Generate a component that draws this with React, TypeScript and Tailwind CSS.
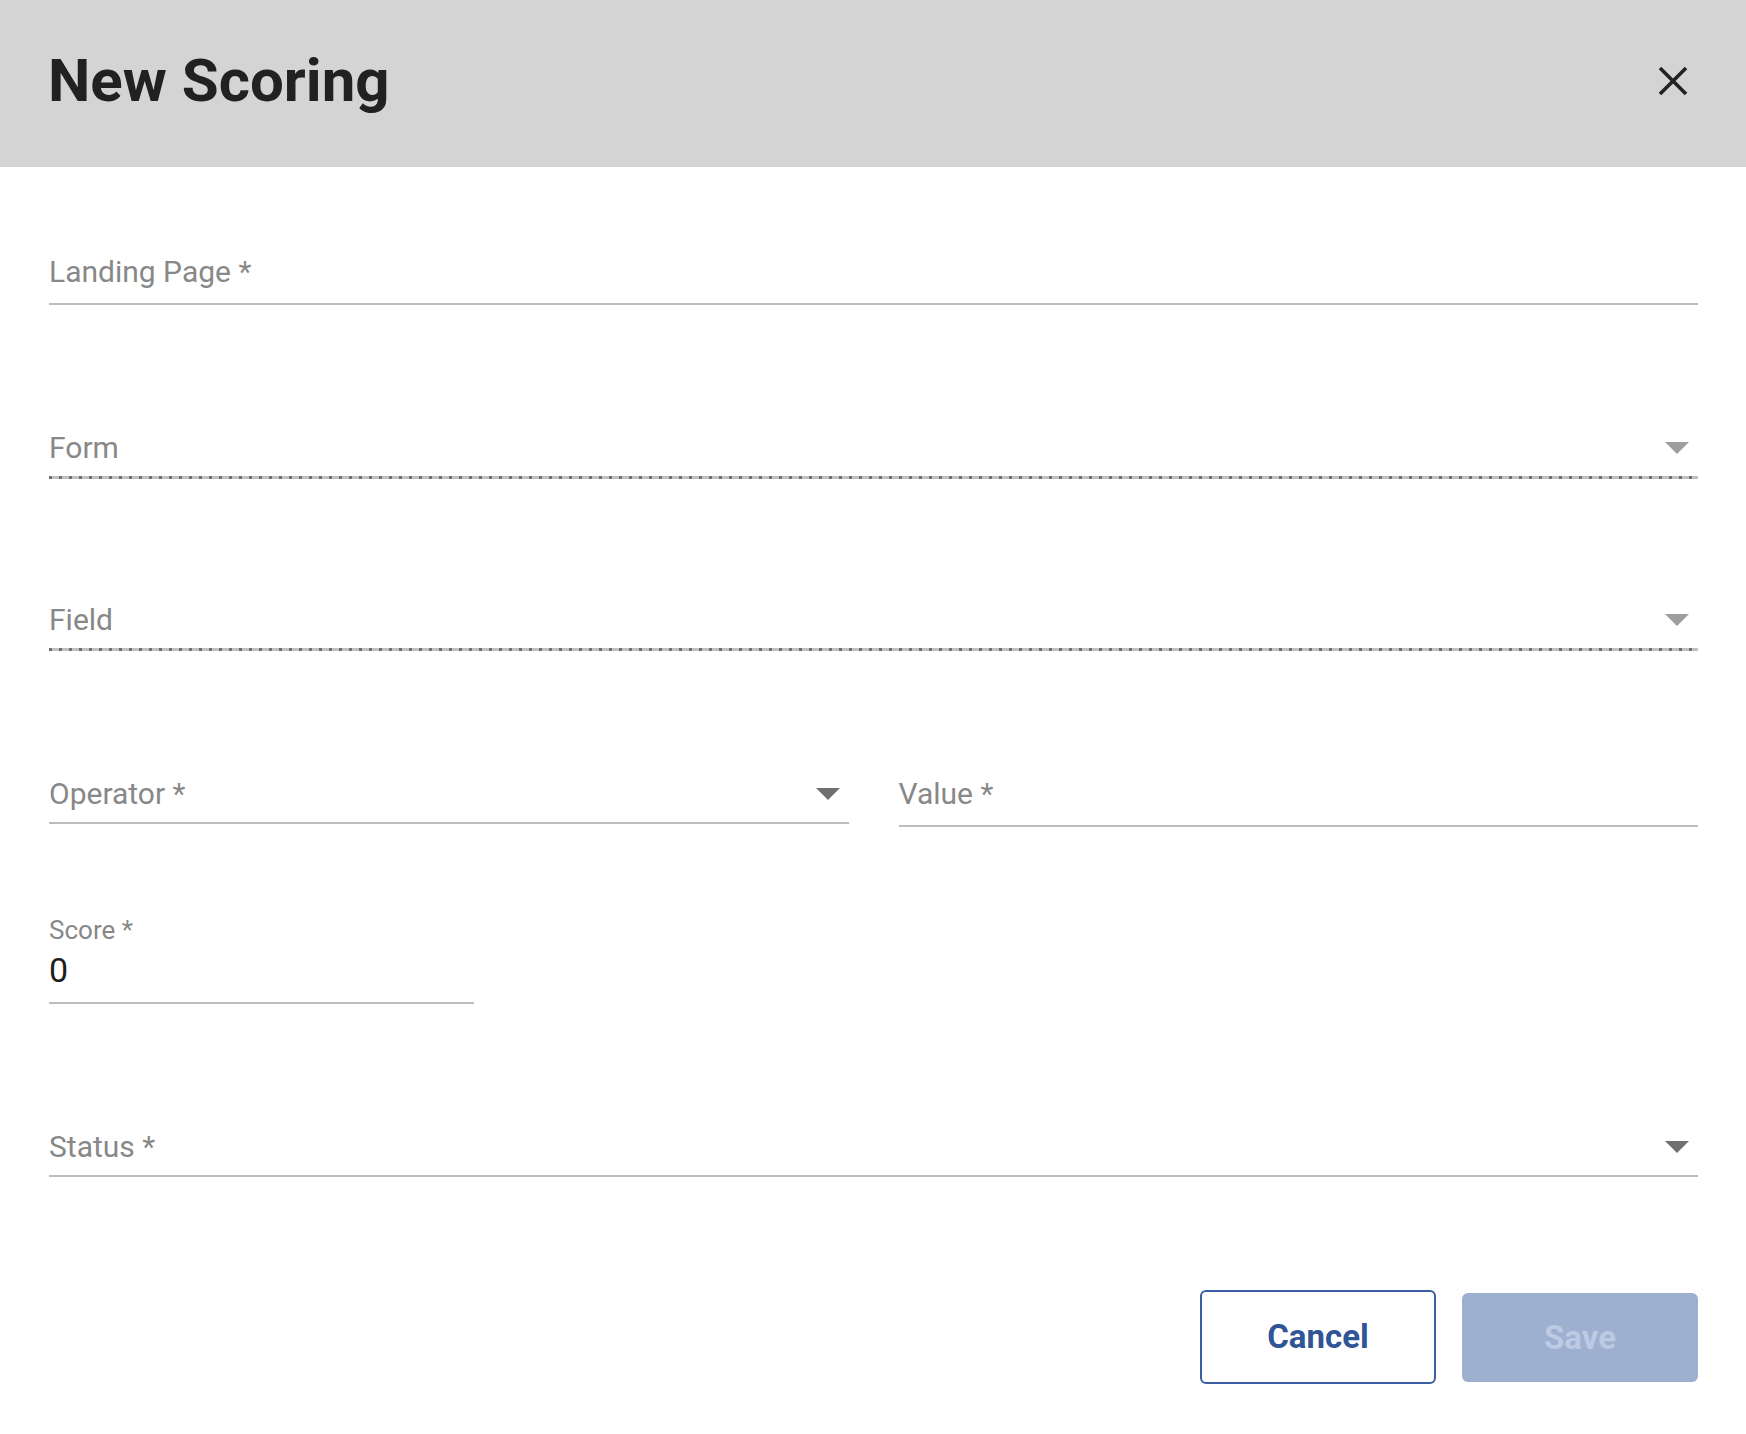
import React from 'react'

type FieldProps = {
  label: string
  arrow?: 'light' | 'dark'
  dotted?: boolean
  lineClass?: string
}

function Field({ label, arrow, dotted, lineClass }: FieldProps) {
  return (
    <div className="flex flex-col">
      <div className={`flex items-end justify-between ${lineClass ?? 'pb-[13px]'}`}>
        <span className="text-[30px] leading-none text-[#888888]">{label}</span>
        {arrow && (
          <span
            className={`mb-[9px] mr-[9px] h-0 w-0 border-x-[12px] border-t-[12px] border-x-transparent ${
              arrow === 'light' ? 'border-t-[#9e9e9e]' : 'border-t-[#707070]'
            }`}
          />
        )}
      </div>
      {dotted ? (
        <div className="-mb-px h-[3px] bg-[repeating-linear-gradient(to_right,#707070_0_3px,#c0c0c0_3px_10px)]" />
      ) : (
        <div className="h-[2px] bg-[#bdbdbd]" />
      )}
    </div>
  )
}

export default function App() {
  return (
    <div className="min-h-[1434px] w-full bg-white font-['Roboto',sans-serif]">
      <header className="flex h-[167px] items-center justify-between bg-[#d4d4d4] pb-[5px] pl-[48px] pr-[58px]">
        <h1 className="text-[60px] font-bold leading-none text-[#212121]">New Scoring</h1>
        <button className="flex h-[30px] w-[30px] items-center justify-center" aria-label="Close">
          <svg width="30" height="30" viewBox="0 0 30 30" fill="none">
            <path d="M2 2 L28 28 M28 2 L2 28" stroke="#222222" strokeWidth="3.6" />
          </svg>
        </button>
      </header>

      <div className="flex flex-col pl-[49px] pr-[48px]">
        <div className="mt-[90px]">
          <Field label="Landing Page *" lineClass="pb-[16px]" />
        </div>
        <div className="mt-[128px]">
          <Field label="Form" arrow="light" dotted />
        </div>
        <div className="mt-[127px]">
          <Field label="Field" arrow="light" dotted />
        </div>
        <div className="mt-[129px] grid grid-cols-2 gap-[50px]">
          <Field label="Operator *" arrow="dark" />
          <Field label="Value *" lineClass="pb-[16px]" />
        </div>

        <div className="mt-[90px] flex w-[425px] flex-col">
          <span className="text-[26px] leading-none text-[#888888]">Score *</span>
          <span className="mt-[10px] pb-[15px] text-[34px] leading-none text-[#1e1e1e]">0</span>
          <div className="h-[2px] bg-[#bdbdbd]" />
        </div>

        <div className="mt-[128px]">
          <Field label="Status *" arrow="dark" />
        </div>

        <div className="mt-[113px] flex justify-end gap-[26px]">
          <button className="h-[94px] w-[236px] rounded-[6px] border-2 border-[#3a5e9f] bg-white text-[33px] font-bold text-[#2f5597]">
            Cancel
          </button>
          <button
            disabled
            className="mt-[3px] h-[89px] w-[236px] rounded-[6px] bg-[#9eb0d0] text-[33px] font-bold text-[#bccae3]"
          >
            Save
          </button>
        </div>
      </div>
    </div>
  )
}
